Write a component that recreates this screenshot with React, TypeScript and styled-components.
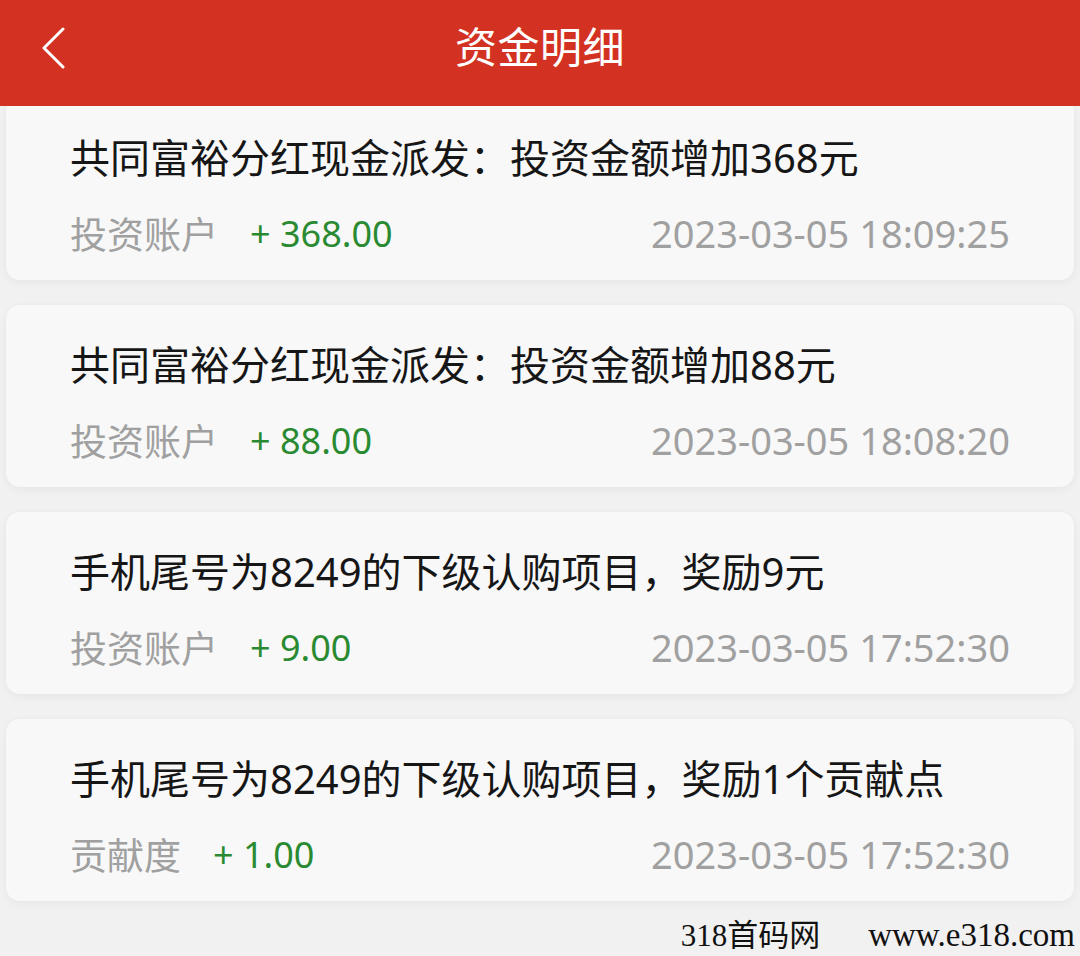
import React from 'react';
import styled, { createGlobalStyle } from 'styled-components';

interface Record {
  title: string;
  account: string;
  amount: string;
  time: string;
}

const records: Record[] = [
  { title: '共同富裕分红现金派发：投资金额增加368元', account: '投资账户', amount: '+ 368.00', time: '2023-03-05 18:09:25' },
  { title: '共同富裕分红现金派发：投资金额增加88元', account: '投资账户', amount: '+ 88.00', time: '2023-03-05 18:08:20' },
  { title: '手机尾号为8249的下级认购项目，奖励9元', account: '投资账户', amount: '+ 9.00', time: '2023-03-05 17:52:30' },
  { title: '手机尾号为8249的下级认购项目，奖励1个贡献点', account: '贡献度', amount: '+ 1.00', time: '2023-03-05 17:52:30' },
];

const GlobalStyle = createGlobalStyle`
  html, body {
    margin: 0;
    padding: 0;
    background: #f1f1f1;
    font-family: "Noto Sans", "Noto Sans CJK SC", sans-serif;
  }
`;

const Page = styled.div`
  position: relative;
  width: 1080px;
  height: 956px;
  overflow: hidden;
  background: #f1f1f1;
`;

const Header = styled.header`
  position: relative;
  z-index: 2;
  height: 106px;
  background: #d33222;
  display: flex;
  align-items: flex-start;
  justify-content: center;
  padding-top: 20px;
  box-sizing: border-box;
`;

const BackButton = styled.div`
  position: absolute;
  left: 40px;
  top: 27px;
  width: 26px;
  height: 42px;
  display: flex;
`;

const Title = styled.h1`
  margin: 0;
  font-size: 42px;
  line-height: 54px;
  font-weight: 400;
  color: #ffffff;
  letter-spacing: 0.5px;
`;

const List = styled.div`
  display: flex;
  flex-direction: column;
  gap: 25px;
  padding: 0 6px;
  margin-top: -8px;
`;

const Card = styled.div`
  height: 182px;
  box-sizing: border-box;
  padding: 35px 64px 22px 64px;
  background: #f8f8f8;
  border-radius: 14px;
  box-shadow: 0 3px 8px rgba(0, 0, 0, 0.045), 0 -1px 4px rgba(0, 0, 0, 0.02);
  display: flex;
  flex-direction: column;
  gap: 25px;
`;

const ItemTitle = styled.div`
  font-size: 40px;
  line-height: 50px;
  color: #161616;
  white-space: nowrap;
`;

const Meta = styled.div`
  display: flex;
  align-items: center;
  height: 50px;
`;

const Account = styled.span`
  font-size: 37px;
  color: #a0a0a0;
`;

const Amount = styled.span`
  margin-left: 32px;
  font-size: 36px;
  color: #2a8a31;
`;

const Time = styled.span`
  margin-left: auto;
  font-size: 38px;
  color: #a0a0a0;
`;

const Watermark = styled.div`
  position: absolute;
  right: 5px;
  bottom: 0;
  display: flex;
  align-items: baseline;
  gap: 48px;
  font-family: "Liberation Serif", "Noto Sans CJK SC", serif;
  font-size: 33px;
  line-height: 40px;
  color: #111;
`;

const WatermarkName = styled.span`
  font-size: 31px;
`;

const App: React.FC = () => {
  return (
    <Page>
      <GlobalStyle />
      <Header>
        <BackButton>
          <svg width="26" height="42" viewBox="0 0 26 42" fill="none">
            <path d="M23 2 L4 21 L23 40" stroke="#ffffff" strokeWidth="3" strokeLinecap="round" strokeLinejoin="round" />
          </svg>
        </BackButton>
        <Title>资金明细</Title>
      </Header>
      <List>
        {records.map((r, i) => (
          <Card key={i}>
            <ItemTitle>{r.title}</ItemTitle>
            <Meta>
              <Account>{r.account}</Account>
              <Amount>{r.amount}</Amount>
              <Time>{r.time}</Time>
            </Meta>
          </Card>
        ))}
      </List>
      <Watermark>
        <WatermarkName>318首码网</WatermarkName>
        <span>www.e318.com</span>
      </Watermark>
    </Page>
  );
};

export default App;
